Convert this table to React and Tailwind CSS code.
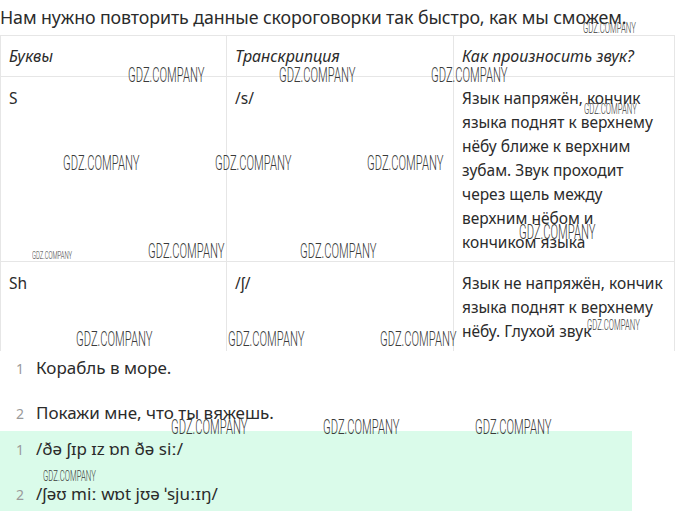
import React from "react";

// [left x, vertical centre y, width]
const wm = [
  [583, 29, 54],
  [128, 75, 78],
  [279, 75, 78],
  [431, 75, 78],
  [584, 110, 54],
  [63, 163, 78],
  [215, 163, 78],
  [367, 163, 78],
  [32, 256, 41],
  [148, 251, 78],
  [300, 251, 78],
  [519, 232, 78],
  [76, 339, 78],
  [228, 339, 78],
  [380, 339, 78],
  [587, 326, 54],
  [171, 427, 78],
  [323, 427, 78],
  [475, 427, 78],
  [43, 477, 54],
];

function Watermark({ x, y, w }) {
  const s = (w / 78) * 20;
  return (
    <div
      className="absolute whitespace-nowrap text-[#3a3a3a] leading-none pointer-events-none origin-top-left font-light"
      style={{
        left: x,
        top: y - s * 0.49,
        fontSize: s,
        fontFamily: 'Roboto, "Liberation Sans", sans-serif',
        transform: "scaleX(0.56)",
      }}
    >
      GDZ.COMPANY
    </div>
  );
}

export default function App() {
  return (
    <div
      className="relative w-[680px] h-[511px] overflow-hidden bg-white text-[#2b2b2b]"
      style={{ fontFamily: '"Noto Sans", "Open Sans", sans-serif' }}
    >
      <p className="text-[17.8px] leading-[36px] tracking-[-0.1px] whitespace-nowrap h-[36px] -mt-[1px]">
        Нам нужно повторить данные скороговорки так быстро, как мы сможем.
      </p>
      <div className="h-[316px] overflow-hidden">
        <table className="w-[674px] border-collapse text-[15.5px] leading-[24px] table-fixed">
          <colgroup>
            <col className="w-[226px]" />
            <col className="w-[227px]" />
            <col className="w-[221px]" />
          </colgroup>
          <thead>
            <tr className="h-[41px] text-[16px]">
              <th className="border border-[#e6e6e6] px-[8px] text-left font-normal italic align-middle">Буквы</th>
              <th className="border border-[#e6e6e6] px-[8px] text-left font-normal italic align-middle">Транскрипция</th>
              <th className="border border-[#e6e6e6] px-[8px] text-left font-normal italic align-middle">Как произносить звук?</th>
            </tr>
          </thead>
          <tbody>
            <tr className="h-[185px]">
              <td className="border border-[#e6e6e6] px-[8px] pt-[9px] align-top">S</td>
              <td className="border border-[#e6e6e6] px-[8px] pt-[9px] align-top">/s/</td>
              <td className="border border-[#e6e6e6] px-[8px] pt-[9px] align-top">
                Язык напряжён, кончик языка поднят к верхнему нёбу ближе к верхним зубам. Звук проходит через щель между верхним нёбом и кончиком языка
              </td>
            </tr>
            <tr>
              <td className="border border-[#e6e6e6] px-[8px] pt-[9px] pb-[12px] align-top">Sh</td>
              <td className="border border-[#e6e6e6] px-[8px] pt-[9px] pb-[12px] align-top">/ʃ/</td>
              <td className="border border-[#e6e6e6] px-[8px] pt-[9px] pb-[12px] align-top">
                Язык не напряжён, кончик языка поднят к верхнему нёбу. Глухой звук
              </td>
            </tr>
          </tbody>
        </table>
      </div>
      <div className="flex flex-col">
        <div className="flex items-center h-[34px]">
          <span className="w-[36px] pl-[16px] text-[14px] text-[#9a9a9a]">1</span>
          <span className="text-[17px]">Корабль в море.</span>
        </div>
        <div className="flex items-center h-[34px] mt-[11px]">
          <span className="w-[36px] pl-[16px] text-[14px] text-[#9a9a9a]">2</span>
          <span className="text-[17px]">Покажи мне, что ты вяжешь.</span>
        </div>
      </div>
      <div className="w-[632px] h-[80px] bg-[#dafbea] mt-[1px] flex flex-col pt-[1px]">
        <div className="flex items-center h-[34px]">
          <span className="w-[36px] pl-[16px] text-[14px] text-[#9a9a9a]">1</span>
          <span className="text-[17px]">/ðə ʃɪp ɪz ɒn ðə siː/</span>
        </div>
        <div className="flex items-center h-[34px] mt-[11px]">
          <span className="w-[36px] pl-[16px] text-[14px] text-[#9a9a9a]">2</span>
          <span className="text-[17px]">/ʃəʊ miː wɒt jʊə ˈsjuːɪŋ/</span>
        </div>
      </div>
      {wm.map(([x, y, w], i) => (
        <Watermark key={i} x={x} y={y} w={w} />
      ))}
    </div>
  );
}
